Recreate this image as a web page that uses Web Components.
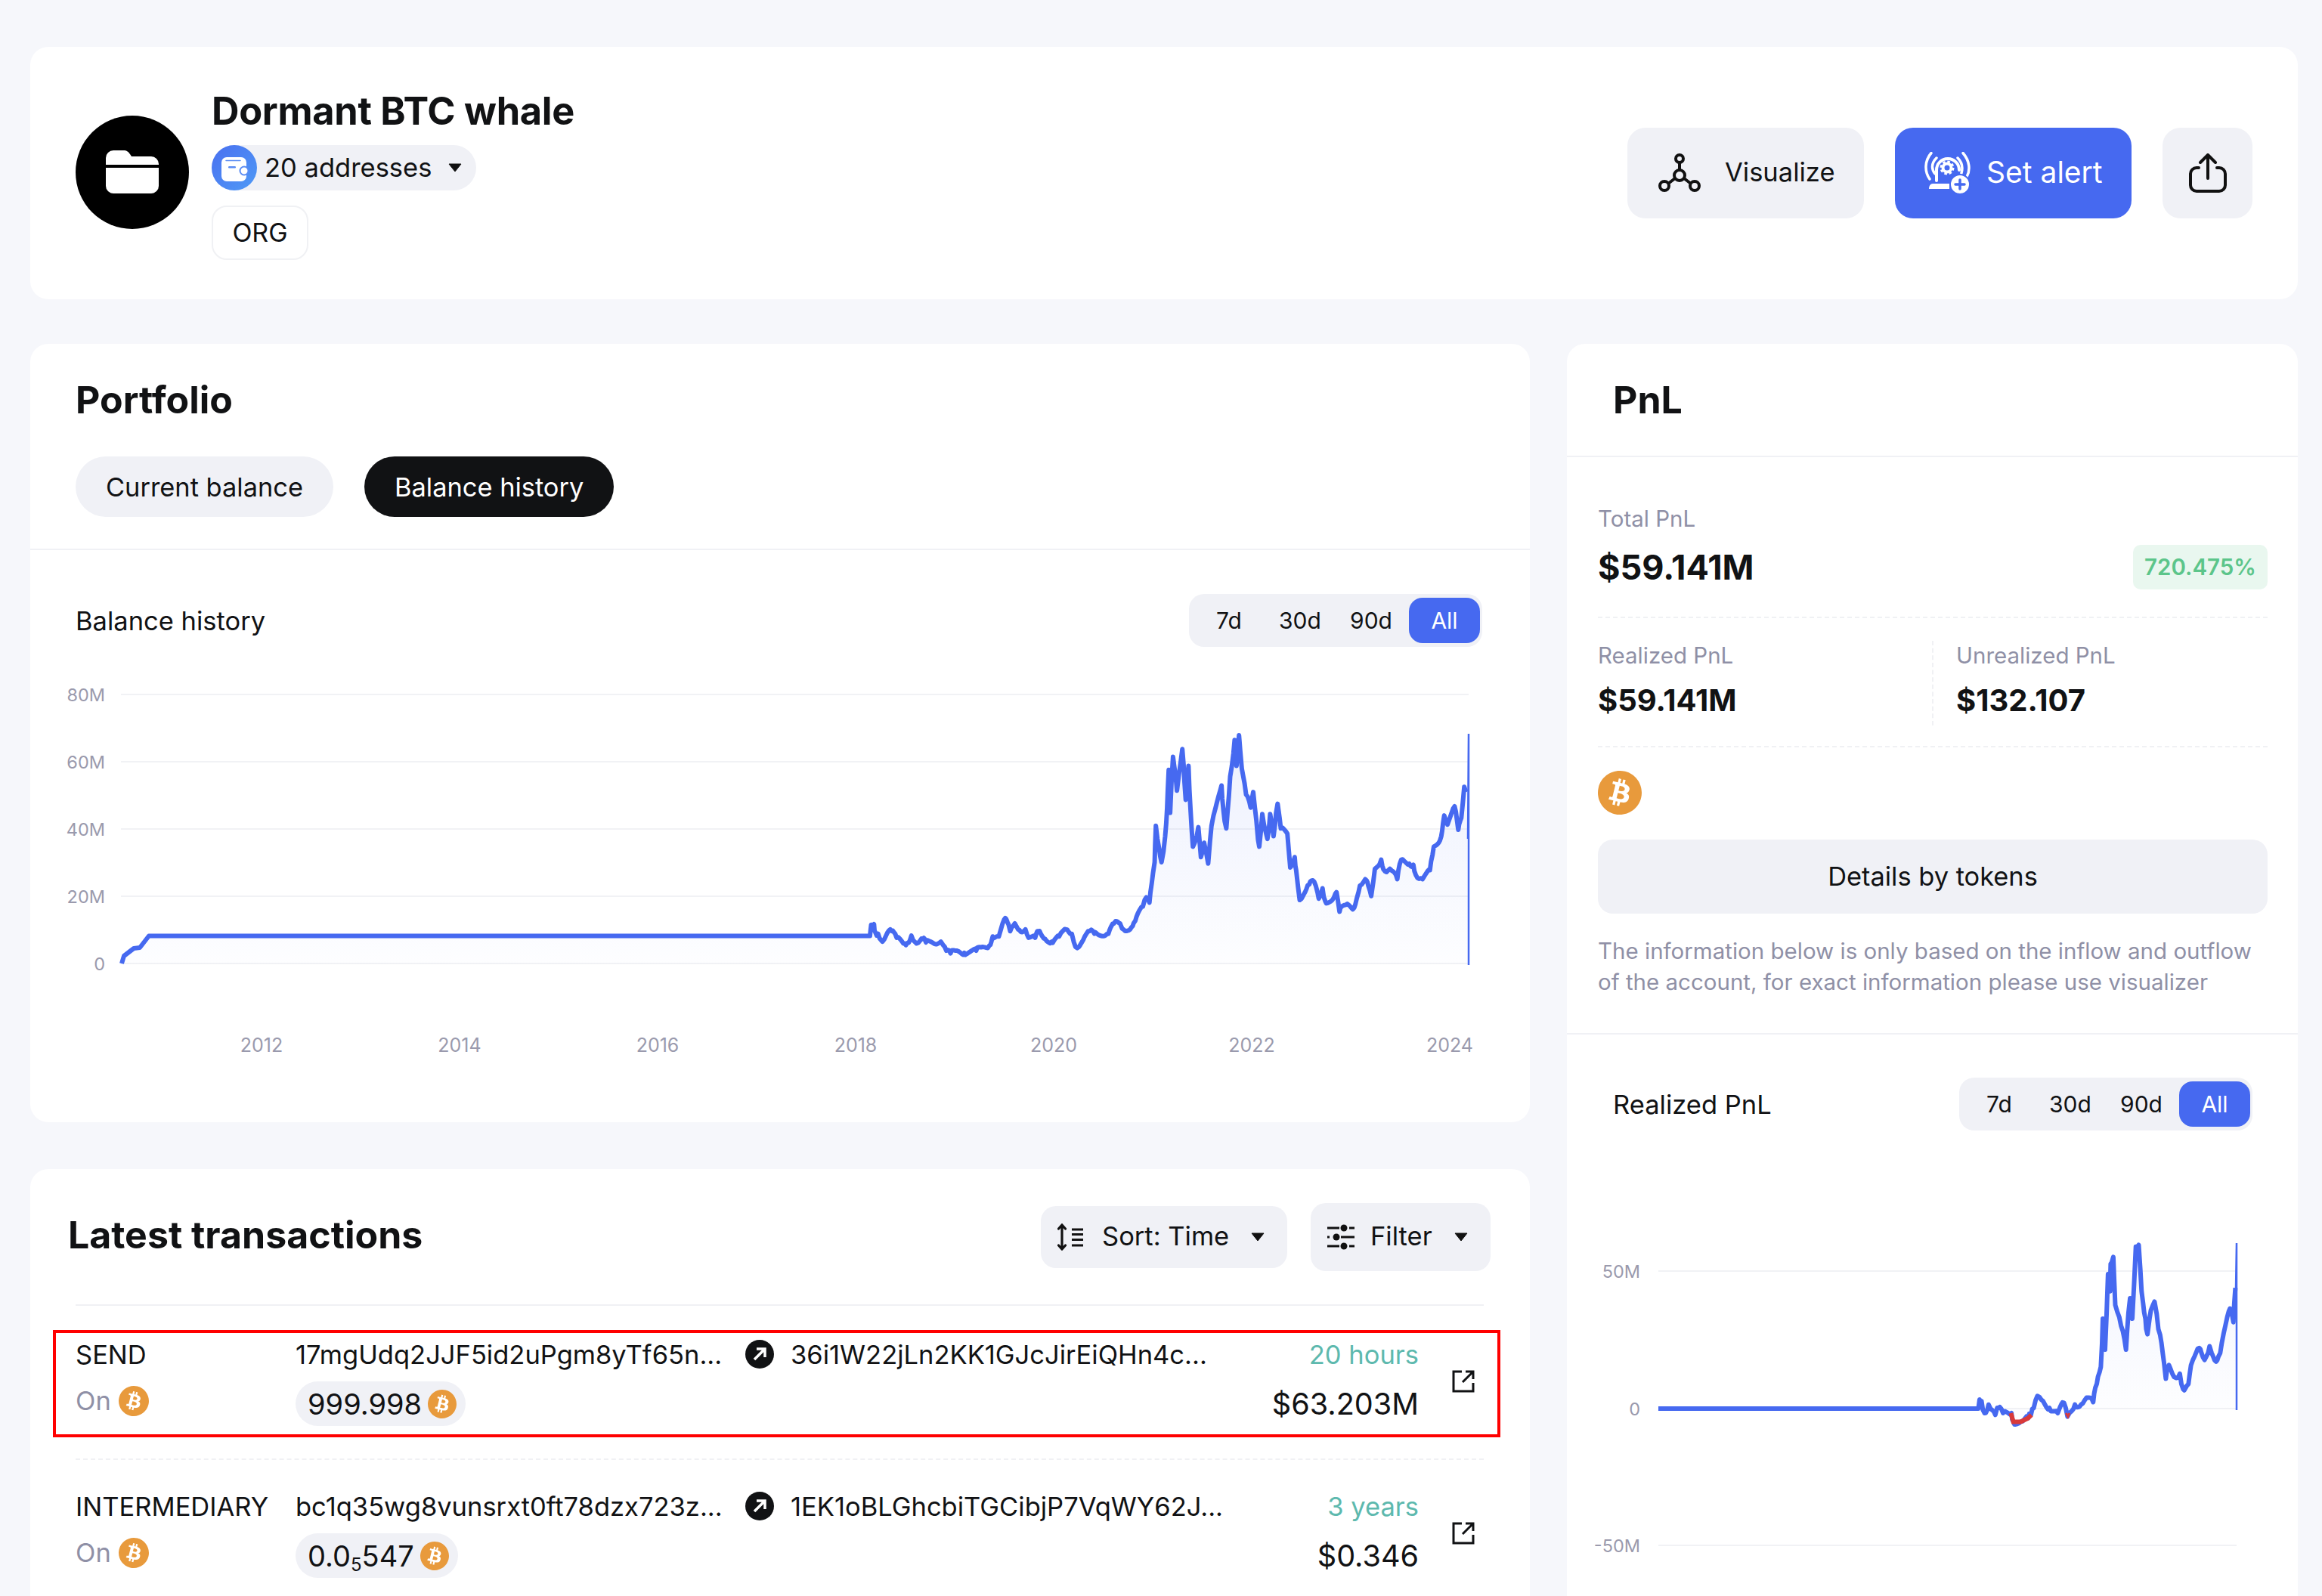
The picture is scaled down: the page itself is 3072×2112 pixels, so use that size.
<!DOCTYPE html>
<html>
<head>
<meta charset="utf-8">
<title>Dormant BTC whale</title>
<style>
    html { height: 2112px; overflow: hidden; }
    body {
        margin: 0;
        height: 2300px;
        background: #f6f7fb;
        color: #111214;
        font-family: Inter, "Liberation Sans", sans-serif;
    }
    .page { padding: 62px 32px 0 40px; display: flex; flex-direction: column; gap: 59px; }
    .cols { display: grid; grid-template-columns: 1984px 967px; column-gap: 49px; height: 2000px; }
    .left { display: flex; flex-direction: column; gap: 62px; }
</style>
</head>
<body>

<template id="btc-tpl">
    <style>
        :host { display: inline-flex; width: var(--size, 40px); height: var(--size, 40px); flex: none; }
        svg { width: 100%; height: 100%; display: block; }
    </style>
    <svg viewBox="0 0 24 24"><circle cx="12" cy="12" r="10" fill="#fff"/><path fill="#e89a3c" d="M23.638 14.904c-1.602 6.43-8.113 10.34-14.542 8.736C2.67 22.05-1.244 15.525.362 9.105 1.962 2.67 8.475-1.243 14.9.358c6.43 1.605 10.342 8.115 8.738 14.548v-.002zm-6.35-4.613c.24-1.59-.974-2.45-2.64-3.03l.54-2.153-1.315-.33-.525 2.107c-.345-.087-.705-.167-1.064-.25l.526-2.127-1.32-.33-.54 2.165c-.285-.067-.565-.132-.84-.2l-1.815-.45-.35 1.407s.975.225.955.236c.535.136.63.486.615.766l-1.477 5.92c-.075.166-.24.406-.614.314.015.02-.96-.24-.96-.24l-.66 1.51 1.71.426.93.242-.54 2.19 1.32.327.54-2.17c.36.1.705.19 1.05.273l-.51 2.154 1.32.33.545-2.19c2.24.427 3.93.257 4.64-1.774.57-1.637-.03-2.58-1.217-3.196.854-.193 1.5-.76 1.68-1.93h.01zm-3.01 4.22c-.404 1.64-3.157.75-4.05.53l.72-2.9c.896.23 3.757.67 3.33 2.37zm.41-4.24c-.37 1.49-2.662.735-3.405.55l.654-2.64c.744.18 3.137.524 2.75 2.084v.006z"/></svg>
</template>

<template id="header-tpl">
    <style>
        :host { display: flex; align-items: center; height: 334px; padding: 0 60px; background: #fff; border-radius: 24px; box-sizing: border-box; }
        .avatar { width: 150px; height: 150px; border-radius: 50%; background: #000; display: flex; align-items: center; justify-content: center; flex: none; margin-top: -3px; }
        .info { margin-left: 30px; display: flex; flex-direction: column; align-items: flex-start; margin-top: 3px; }
        h1 { margin: 0 0 15px; font-size: 50.5px; line-height: 60px; font-weight: 700; letter-spacing: -0.3px; }
        .addr { display: flex; align-items: center; height: 60px; width: 350px; background: #f0f1f6; border-radius: 30px; font-size: 34.5px; }
        .addr svg.w { width: 60px; height: 60px; flex: none; }
        .addr span { margin-left: 10px; flex: 1; padding-bottom: 2px; }
        .addr svg.c { width: 18px; height: 12px; margin-right: 19px; }
        .tag { margin-top: 20px; box-sizing: border-box; height: 72px; width: 128px; border: 2px solid #f0f1f4; border-radius: 20px; display: flex; align-items: center; justify-content: center; font-size: 34px; padding-bottom: 2px; }
        .actions { margin-left: auto; display: flex; gap: 41px; }
        .act { height: 120px; box-sizing: border-box; border-radius: 24px; background: #f0f1f6; display: flex; align-items: center; font-size: 34.5px; }
        .act span { padding-bottom: 3px; }
        .vis { width: 313px; padding-left: 41px; gap: 32px; }
        .alert { width: 313px; padding-left: 39px; gap: 20px; background: #4669f0; color: #fff; font-size: 39px; }
        .share { width: 119px; justify-content: center; }
    </style>
    <div class="avatar">
        <svg width="70" height="57" viewBox="0 0 70 57" fill="#fff"><path d="M0 19V10A10 10 0 0 1 10 0h13c5 0 7 2 9 5l2 3h26a10 10 0 0 1 10 10v1z"/><path d="M0 23h70v24a10 10 0 0 1-10 10H10A10 10 0 0 1 0 47z"/></svg>
    </div>
    <div class="info">
        <h1>Dormant BTC whale</h1>
        <div class="addr">
            <svg class="w" viewBox="0 0 60 60">
                <defs><linearGradient id="wg" x1="0" y1="0" x2="1" y2="1"><stop offset="0" stop-color="#4a70f0"/><stop offset="1" stop-color="#4f9af6"/></linearGradient></defs>
                <circle cx="30" cy="30" r="30" fill="url(#wg)"/>
                <rect x="13" y="16" width="33" height="32" rx="7" fill="#fff"/>
                <path d="M19 20.500h19" stroke="#5a8cf3" stroke-width="1.500" stroke-linecap="round"/>
                <rect x="22" y="28" width="10" height="2.500" rx="1.200" fill="#5a8cf3"/>
                <circle cx="43" cy="34" r="5.500" fill="#fff" stroke="#5a8cf3" stroke-width="2"/>
            </svg>
            <span>20 addresses</span>
            <svg class="c" viewBox="0 0 18 12"><path d="M1 1h16L9 11z" fill="#111" stroke="#111" stroke-linejoin="round"/></svg>
        </div>
        <div class="tag">ORG</div>
    </div>
    <div class="actions">
        <div class="act vis">
            <svg width="56" height="52" viewBox="0 0 56 52" fill="none" stroke="#111" stroke-width="4"><circle cx="28" cy="7" r="5"/><circle cx="28" cy="29" r="7"/><circle cx="8" cy="43" r="6"/><circle cx="48" cy="43" r="6"/><path d="M28 12v10M22 33l-9 7M34 33l9 7"/></svg>
            <span>Visualize</span>
        </div>
        <div class="act alert">
            <svg width="62" height="56" viewBox="0 0 62 56" fill="none" stroke="#fff" stroke-linecap="round">
                <path d="M9 1.500C0 12 0 26 7 36M16 8C9 15 9 23 14 29M51 1.500C60 12 61 24 56 33M44 8c6 6 7 13 5 20" stroke-width="3.500"/>
                <path d="M16 38V24a15 15 0 0 1 30 0" stroke-width="4"/>
                <circle cx="30" cy="21" r="5.500" stroke-width="4"/>
                <circle cx="30" cy="21" r="8" stroke-width="3" stroke-dasharray="3.500 2.800" stroke-linecap="butt"/>
                <path d="M11 42h22v7H6c0-4 2-7 5-7z" fill="#fff" stroke="none"/>
                <circle cx="47" cy="43" r="13" fill="#fff" stroke="#4669f0" stroke-width="2"/>
                <path d="M47 37v12M41 43h12" stroke="#4669f0" stroke-width="3.500"/>
            </svg>
            <span>Set alert</span>
        </div>
        <div class="act share">
            <svg width="52" height="52" viewBox="0 0 52 52" fill="none" stroke="#111" stroke-width="4" stroke-linecap="round" stroke-linejoin="round"><path d="M14 19h-3a8 8 0 0 0-8 8v15a8 8 0 0 0 8 8h30a8 8 0 0 0 8-8V27a8 8 0 0 0-8-8h-3"/><path d="M26 33V3M16 12l10-10 10 10"/></svg>
        </div>
    </div>
</template>

<template id="switch-tpl">
    <style>
        :host { display: grid; grid-template-columns: repeat(4, 94px); box-sizing: border-box; padding: 5px 6px; height: 70px; background: #f0f1f6; border-radius: 20px; font-size: 30px; }
        span { display: flex; align-items: center; justify-content: center; border-radius: 18px; }
        .on { background: #4669f0; color: #fff; margin: 0 -3px 0 3px; }
    </style>
    <span>7d</span><span>30d</span><span>90d</span><span class="on">All</span>
</template>

<template id="portfolio-tpl">
    <style>
        :host { display: block; background: #fff; border-radius: 24px; height: 1030px; }
        .head { padding: 44px 60px 42px; border-bottom: 2px solid #f0f1f5; }
        h2 { margin: 0 0 45px; font-size: 50px; line-height: 60px; font-weight: 700; }
        .tabs { display: flex; gap: 41px; }
        .tabs span { height: 80px; border-radius: 40px; display: flex; align-items: center; padding: 0 40px; font-size: 34.4px; background: #f0f1f6; }
        .tabs .on { background: #111214; color: #fff; }
        .bar { display: flex; align-items: center; justify-content: space-between; padding: 58px 63px 0 60px; font-size: 34.5px; }
        line-chart { margin-top: 4px; }
    </style>
    <div class="head">
        <h2>Portfolio</h2>
        <div class="tabs"><span>Current balance</span><span class="on">Balance history</span></div>
    </div>
    <div class="bar"><span>Balance history</span><tf-switch></tf-switch></div>
    <line-chart kind="balance"></line-chart>
</template>

<template id="tx-card-tpl">
    <style>
        :host { display: block; flex: 1; background: #fff; border-radius: 24px; }
        .top { display: flex; align-items: center; height: 179px; padding: 0 52px 0 50px; box-sizing: border-box; }
        h2 { margin: -5px auto 0 0; font-size: 50px; font-weight: 700; }
        .btn { display: flex; align-items: center; background: #f0f1f6; border-radius: 20px; font-size: 34.5px; box-sizing: border-box; }
        .btn span { padding-bottom: 2px; }
        .sort { width: 326px; height: 82px; padding-left: 22px; gap: 25px; }
        .filter { width: 238px; height: 90px; margin-left: 31px; padding-left: 22px; gap: 21px; }
        .btn svg.c { width: 18px; height: 12px; margin-left: auto; margin-right: 30px; }
        .rule { height: 2px; margin: 0 61px 32px 60px; background: #f0f1f4; }
    </style>
    <div class="top">
        <h2>Latest transactions</h2>
        <div class="btn sort">
            <svg width="34" height="36" viewBox="0 0 34 36" fill="none" stroke="#111" stroke-width="3.200" stroke-linecap="round"><path d="M6 2v32M1.500 7L6 2l4.500 5M1.500 29L6 34l4.500-5"/><path d="M19 8h15M19 14.500h15M19 21.500h15M19 29h15" stroke-linecap="butt" stroke-width="2.800"/></svg>
            <span>Sort: Time</span>
            <svg class="c" viewBox="0 0 18 12"><path d="M1 1h16L9 11z" fill="#111" stroke="#111" stroke-linejoin="round"/></svg>
        </div>
        <div class="btn filter">
            <svg width="36" height="34" viewBox="0 0 36 34" fill="#111" stroke="#111" stroke-width="3"><path d="M0 5h16M29 5h7M0 17h3M18 17h18M0 29h16M29 29h7" fill="none"/><circle cx="22" cy="5" r="4.500" stroke="none"/><circle cx="12" cy="17" r="4.500" stroke="none"/><circle cx="22" cy="29" r="4.500" stroke="none"/></svg>
            <span>Filter</span>
            <svg class="c" viewBox="0 0 18 12"><path d="M1 1h16L9 11z" fill="#111" stroke="#111" stroke-linejoin="round"/></svg>
        </div>
    </div>
    <div class="rule"></div>
    <slot></slot>
</template>

<template id="tx-row-tpl">
    <style>
        :host { display: grid; grid-template-columns: 291px 595px 60px 1fr auto 74px; grid-template-rows: 44px 59px; row-gap: 14px; margin: 0 39px 0 30px; box-sizing: border-box; height: 142px; padding: 6px 30px 0 26px; border: 4px solid transparent; font-size: 34.5px; align-items: center; }
        :host([marked]) { border-color: #f00; }
        .type { grid-column: 1; grid-row: 1; }
        .from { grid-column: 2; grid-row: 1; }
        .to { grid-column: 4; grid-row: 1; }
        .on { grid-column: 1; grid-row: 2; color: #8f90a6; display: flex; align-items: center; gap: 10px; margin-top: -8px; }
        .amt { grid-column: 2; grid-row: 2; justify-self: start; display: inline-flex; align-items: center; gap: 8px; height: 59px; padding: 0 12px 0 16px; background: #f0f1f6; border-radius: 30px; font-size: 38px; }
        sub { font-size: 24px; line-height: 0; vertical-align: -6px; }
        .arrow { grid-column: 3; grid-row: 1; width: 38px; height: 38px; }
        .time { grid-column: 5; grid-row: 1; justify-self: end; color: #5db9ae; }
        .usd { grid-column: 4 / 6; grid-row: 2; justify-self: end; font-size: 39.6px; }
        .ext { grid-column: 6; grid-row: 1 / 3; justify-self: end; width: 30px; height: 30px; margin-top: -2px; }
    </style>
    <div class="type"></div>
    <div class="from"></div>
    <svg class="arrow" viewBox="0 0 38 38"><circle cx="19" cy="19" r="19" fill="#111214"/><path d="M12 26L25 13M15 12h11v11" fill="none" stroke="#fff" stroke-width="3.500"/></svg>
    <div class="to"></div>
    <div class="on">On <btc-coin></btc-coin></div>
    <div class="amt"><span class="val"></span><btc-coin style="--size:38px"></btc-coin></div>
    <div class="time"></div>
    <div class="usd"></div>
    <svg class="ext" viewBox="0 0 30 30" fill="none" stroke="#111214" stroke-width="3"><path d="M13 2H2v26h26V17"/><path d="M14 16L27 3M18 2h10v10" stroke-width="3"/></svg>
</template>

<template id="pnl-tpl">
    <style>
        :host { display: block; background: #fff; border-radius: 24px; }
        .head { height: 150px; box-sizing: border-box; padding: 44px 61px 0; border-bottom: 2px solid #f0f1f5; }
        h2 { margin: 0; font-size: 50px; line-height: 60px; font-weight: 700; }
        .body { padding: 62px 40px 0 41px; }
        .lbl { color: #8f90a6; font-size: 29.5px; line-height: 38px; }
        .total { display: flex; align-items: center; justify-content: space-between; margin-top: 15px; height: 60px; }
        .total b { font-size: 45px; font-weight: 700; }
        .pct { height: 59px; width: 178px; box-sizing: border-box; display: flex; align-items: center; justify-content: center; background: #e9f7ef; border-radius: 10px; color: #5cc58a; font-size: 29.5px; font-weight: 600; }
        .split { margin-top: 36px; border-top: 2px dashed #f0f1f4; border-bottom: 2px dashed #f0f1f4; height: 173px; box-sizing: border-box; display: grid; grid-template-columns: 442px 1fr; padding-top: 30px; }
        .split > div:last-child { border-left: 2px dashed #f0f1f4; padding-left: 30px; height: 112px; }
        .split b { display: block; margin-top: 17px; font-size: 40px; line-height: 48px; font-weight: 700; }
        .coin { display: block; margin-top: 31px; }
        .details { margin-top: 33px; height: 98px; border-radius: 20px; background: #f0f1f6; display: flex; align-items: center; justify-content: center; font-size: 34.4px; padding-bottom: 2px; box-sizing: border-box; }
        p { margin: 29px 0 0; color: #8f90a6; font-size: 29.5px; line-height: 41px; white-space: nowrap; }
        .rule { margin-top: 47px; border-top: 2px solid #f0f1f5; }
        .bar { display: flex; align-items: center; justify-content: space-between; padding: 57px 60px 0 61px; font-size: 34.5px; }
        line-chart { margin-top: 24px; }
    </style>
    <div class="head"><h2>PnL</h2></div>
    <div class="body">
        <div class="lbl">Total PnL</div>
        <div class="total"><b>$59.141M</b><span class="pct">720.475%</span></div>
        <div class="split">
            <div><div class="lbl">Realized PnL</div><b>$59.141M</b></div>
            <div><div class="lbl">Unrealized PnL</div><b>$132.107</b></div>
        </div>
        <btc-coin class="coin" style="--size:58px"></btc-coin>
        <div class="details">Details by tokens</div>
        <p>The information below is only based on the inflow and outflow<br>of the account, for exact information please use visualizer</p>
    </div>
    <div class="rule"></div>
    <div class="bar"><span>Realized PnL</span><tf-switch></tf-switch></div>
    <line-chart kind="pnl"></line-chart>
</template>

<div class="page">
    <wallet-header></wallet-header>
    <div class="cols">
        <div class="left">
            <portfolio-card></portfolio-card>
            <tx-card>
                <tx-row marked type="SEND" from="17mgUdq2JJF5id2uPgm8yTf65n..." to="36i1W22jLn2KK1GJcJirEiQHn4c..." time="20 hours" val="999.998" usd="$63.203M"></tx-row>
                <tx-sep></tx-sep>
                <tx-row type="INTERMEDIARY" from="bc1q35wg8vunsrxt0ft78dzx723z..." to="1EK1oBLGhcbiTGCibjP7VqWY62J..." time="3 years" val="0.0<sub>5</sub>547" usd="$0.346"></tx-row>
            </tx-card>
        </div>
        <pnl-card></pnl-card>
    </div>
</div>

<script>
function fromTemplate(id) {
    return document.getElementById(id).content.cloneNode(true);
}

class Simple extends HTMLElement {
    constructor() {
        super();
        this.attachShadow({mode: 'open'});
        this.shadowRoot.appendChild(fromTemplate(this.constructor.tpl));
    }
}

class BtcCoin extends Simple { static tpl = 'btc-tpl'; }
class WalletHeader extends Simple { static tpl = 'header-tpl'; }
class TfSwitch extends Simple { static tpl = 'switch-tpl'; }
class PortfolioCard extends Simple { static tpl = 'portfolio-tpl'; }
class TxCard extends Simple { static tpl = 'tx-card-tpl'; }
class PnlCard extends Simple { static tpl = 'pnl-tpl'; }

class TxSep extends HTMLElement {
    constructor() {
        super();
        this.attachShadow({mode: 'open'});
        this.shadowRoot.innerHTML = '<style>:host{display:block;border-top:2px dashed #f0f1f4;margin:28px 61px 29px 60px}</style>';
    }
}

class TxRow extends Simple {
    static tpl = 'tx-row-tpl';
    connectedCallback() {
        const root = this.shadowRoot;
        root.querySelector('.type').textContent = this.getAttribute('type');
        root.querySelector('.from').textContent = this.getAttribute('from');
        root.querySelector('.to').textContent = this.getAttribute('to');
        root.querySelector('.time').textContent = this.getAttribute('time');
        root.querySelector('.usd').textContent = this.getAttribute('usd');
        root.querySelector('.val').innerHTML = this.getAttribute('val');
    }
}

// points read off the screenshot, in crop coordinates, mapped to page pixels below
const balancePts = [[180,983],[183,940],[190,938],[194,970],[200,975],[208,1005],[214,985],[221,962],[228,965],[240,990],[255,1012],[262,1010],[272,982],[282,1012],[295,995],[303,1008],[335,1005],[345,1040],[355,1050],[370,1040],[385,1048],[410,1040],[425,1025],[438,1020],[447,985],[460,985],[470,920],[478,930],[485,965],[495,935],[503,960],[518,958],[525,990],[537,990],[545,965],[560,995],[573,1005],[590,985],[605,958],[618,975],[625,1025],[640,1005],[655,965],[665,975],[697,975],[708,935],[722,935],[730,958],[745,950],[755,925],[770,870],[777,835],[784,855],[790,780],[797,700],[800,560],[806,640],[811,700],[818,600],[822,490],[826,345],[830,510],[837,295],[845,425],[855,265],[863,460],[870,330],[875,500],[880,640],[890,565],[895,680],[903,625],[913,705],[920,560],[930,470],[940,405],[945,500],[952,570],[960,370],[968,230],[972,330],[978,212],[985,340],[995,440],[1003,490],[1008,430],[1015,540],[1023,640],[1030,515],[1040,610],[1045,515],[1052,600],[1062,475],[1070,570],[1082,590],[1088,720],[1100,680],[1103,730],[1110,845],[1120,815],[1130,785],[1142,775],[1150,840],[1158,800],[1165,850],[1180,845],[1188,815],[1195,890],[1212,860],[1228,875],[1240,790],[1254,770],[1265,830],[1272,725],[1285,690],[1295,735],[1305,725],[1320,765],[1330,690],[1345,705],[1355,710],[1365,760],[1375,765],[1392,730],[1400,640],[1415,600],[1423,520],[1430,555],[1443,485],[1452,575],[1460,530],[1466,410],[1470,430]];

const pnlPts = [[862,1022],[865,995],[870,1000],[877,1035],[885,1010],[897,1040],[905,1020],[915,1035],[930,1035],[935,1060],[950,1060],[965,1050],[972,1040],[978,1020],[985,985],[995,1000],[1010,1020],[1025,1035],[1040,1005],[1047,1045],[1060,1010],[1075,1010],[1085,990],[1098,1003],[1107,950],[1115,900],[1118,760],[1122,850],[1128,630],[1133,680],[1135,600],[1141,580],[1145,720],[1155,780],[1165,850],[1175,700],[1180,760],[1187,550],[1192,545],[1197,680],[1205,760],[1210,805],[1218,735],[1225,710],[1232,790],[1240,860],[1247,935],[1255,895],[1265,930],[1275,920],[1282,965],[1295,950],[1300,895],[1315,845],[1328,880],[1337,840],[1350,885],[1360,860],[1370,780],[1378,730],[1385,770],[1390,670]];

// splits each segment and wobbles it so the line looks like dense price data
function jag(pts, amp) {
    const out = [];
    let k = 0;
    for (let i = 0; i < pts.length - 1; i++) {
        const [x0, y0] = pts[i], [x1, y1] = pts[i + 1];
        const n = Math.max(2, Math.round(Math.abs(x1 - x0) / 3));
        for (let j = 0; j < n; j++) {
            const t = j / n;
            const wob = j ? Math.sin(++k * 12.9898) * amp : 0;
            out.push([x0 + (x1 - x0) * t + Math.cos(k * 7.1) * 1.2, y0 + (y1 - y0) * t + wob]);
        }
    }
    out.push(pts[pts.length - 1]);
    return out;
}

function toD(pts) {
    return pts.map((p, i) => (i ? 'L' : 'M') + p[0].toFixed(1) + ' ' + p[1].toFixed(1)).join('');
}

const grid = (x0, x1, y) => `<line x1="${x0}" x2="${x1}" y1="${y}" y2="${y}" stroke="#f1f2f5" stroke-width="2"/>`;
const yLabel = (x, y, t) => `<text class="y" x="${x}" y="${y + 9}" text-anchor="end">${t}</text>`;

class LineChart extends HTMLElement {
    constructor() {
        super();
        this.attachShadow({mode: 'open'});
    }
    connectedCallback() {
        const svg = this.getAttribute('kind') === 'pnl' ? this.pnl() : this.balance();
        this.shadowRoot.innerHTML = `<style>
            :host { display: block; }
            svg { display: block; }
            text { font-family: Inter, "Liberation Sans", sans-serif; font-size: 25px; fill: #9a9aad; }
            text.y { font-size: 23.5px; }
        </style>${svg}`;
    }
    balance() {
        const map = p => [1040 + p[0] / 1.633, 900 + p[1] / 2.904];
        const line = [[161,1275],[164,1265],[177,1255],[185,1254],[197,1238.5]]
            .concat(jag(balancePts, 9).map(map));
        let g = [919, 1008, 1097, 1186, 1275].map(y => grid(160, 1943, y)).join('');
        g += ['80M', '60M', '40M', '20M', '0'].map((t, i) => yLabel(139, 919 + i * 89, t)).join('');
        g += ['2012', '2014', '2016', '2018', '2020', '2022', '2024'].map((t, i) =>
            `<text x="${346 + i * 262}" y="1392" text-anchor="middle">${t}</text>`).join('');
        return `<svg width="1984" height="560" viewBox="40 860 1984 560">
            <defs><linearGradient id="bf" gradientUnits="userSpaceOnUse" x1="0" y1="971" x2="0" y2="1275"><stop offset="0" stop-color="#4669f0" stop-opacity=".1"/><stop offset="1" stop-color="#4669f0" stop-opacity=".01"/></linearGradient></defs>
            ${g}
            <path d="${toD(line)}L1943 1275Z" fill="url(#bf)"/>
            <path d="${toD(line)}" fill="none" stroke="#4669f0" stroke-width="6" stroke-linejoin="round"/>
            <path d="M1942 1110L1943 971L1943 1277" fill="none" stroke="#4669f0" stroke-width="2.5"/>
        </svg>`;
    }
    pnl() {
        const map = p => [2060 + p[0] / 1.549, 1400 + p[1] / 2.202];
        const line = [[2194, 1864]].concat(jag(pnlPts, 8).map(map));
        const neg = [[930,1035],[935,1060],[950,1060],[965,1050],[972,1040]].map(map);
        const negTip = [[1043,1035],[1047,1045],[1050,1035]].map(map);
        let g = [1682, 1864, 2045].map(y => grid(2194, 2959, y)).join('');
        g += yLabel(2170, 1682, '50M') + yLabel(2170, 1864, '0') + yLabel(2170, 2045, '-50M');
        return `<svg width="967" height="600" viewBox="2073 1520 967 600">
            <defs><linearGradient id="pf" gradientUnits="userSpaceOnUse" x1="0" y1="1660" x2="0" y2="1864"><stop offset="0" stop-color="#4669f0" stop-opacity=".07"/><stop offset="1" stop-color="#4669f0" stop-opacity=".01"/></linearGradient></defs>
            ${g}
            <path d="${toD(line)}L2959 1864Z" fill="url(#pf)"/>
            <path d="${toD(line)}" fill="none" stroke="#4669f0" stroke-width="6" stroke-linejoin="round"/>
            <path d="${toD(neg)}" fill="none" stroke="#d93a3a" stroke-width="6"/>
            <path d="${toD(negTip)}" fill="none" stroke="#d93a3a" stroke-width="3"/>
            <path d="M2958 1705L2959 1645L2959 1866" fill="none" stroke="#4669f0" stroke-width="2.5"/>
        </svg>`;
    }
}

window.customElements.define('btc-coin', BtcCoin);
window.customElements.define('wallet-header', WalletHeader);
window.customElements.define('tf-switch', TfSwitch);
window.customElements.define('line-chart', LineChart);
window.customElements.define('portfolio-card', PortfolioCard);
window.customElements.define('tx-row', TxRow);
window.customElements.define('tx-sep', TxSep);
window.customElements.define('tx-card', TxCard);
window.customElements.define('pnl-card', PnlCard);
</script>
</body>
</html>
